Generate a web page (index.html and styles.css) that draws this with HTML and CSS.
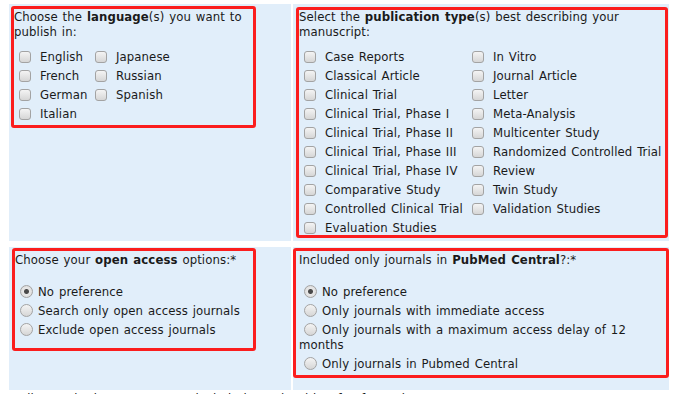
FILE: index.html
```html
<!DOCTYPE html>
<html lang="en">
<head>
    <meta charset="UTF-8">
    <title>Journal search options</title>
    <link rel="stylesheet" href="styles.css">
</head>
<body>
    <div class="options">

        <!-- Row 1: languages / publication types -->
        <div class="cell cell-lang">
            <div class="mark mark-lang">
                <p class="ask">Choose the <b>language</b>(s) you want to publish in:</p>
                <div class="checks checks-lang">
                    <label class="opt"><input type="checkbox">English</label>
                    <label class="opt"><input type="checkbox">French</label>
                    <label class="opt"><input type="checkbox">German</label>
                    <label class="opt"><input type="checkbox">Italian</label>
                    <label class="opt"><input type="checkbox">Japanese</label>
                    <label class="opt"><input type="checkbox">Russian</label>
                    <label class="opt"><input type="checkbox">Spanish</label>
                </div>
            </div>
        </div>

        <div class="cell cell-type">
            <div class="mark mark-type">
                <p class="ask">Select the <b>publication type</b>(s) best describing your manuscript:</p>
                <div class="checks checks-type">
                    <label class="opt"><input type="checkbox">Case Reports</label>
                    <label class="opt"><input type="checkbox">Classical Article</label>
                    <label class="opt"><input type="checkbox">Clinical Trial</label>
                    <label class="opt"><input type="checkbox">Clinical Trial, Phase I</label>
                    <label class="opt"><input type="checkbox">Clinical Trial, Phase II</label>
                    <label class="opt"><input type="checkbox">Clinical Trial, Phase III</label>
                    <label class="opt"><input type="checkbox">Clinical Trial, Phase IV</label>
                    <label class="opt"><input type="checkbox">Comparative Study</label>
                    <label class="opt"><input type="checkbox">Controlled Clinical Trial</label>
                    <label class="opt"><input type="checkbox">Evaluation Studies</label>
                    <label class="opt"><input type="checkbox">In Vitro</label>
                    <label class="opt"><input type="checkbox">Journal Article</label>
                    <label class="opt"><input type="checkbox">Letter</label>
                    <label class="opt"><input type="checkbox">Meta-Analysis</label>
                    <label class="opt"><input type="checkbox">Multicenter Study</label>
                    <label class="opt"><input type="checkbox">Randomized Controlled Trial</label>
                    <label class="opt"><input type="checkbox">Review</label>
                    <label class="opt"><input type="checkbox">Twin Study</label>
                    <label class="opt"><input type="checkbox">Validation Studies</label>
                </div>
            </div>
        </div>

        <!-- Row 2: open access / PubMed Central -->
        <div class="cell cell-oa">
            <div class="mark mark-oa">
                <p class="ask">Choose your <b>open access</b> options:*</p>
                <div class="radios">
                    <label class="pick"><input type="radio" name="oa" checked>No preference</label>
                    <label class="pick"><input type="radio" name="oa">Search only open access journals</label>
                    <label class="pick"><input type="radio" name="oa">Exclude open access journals</label>
                </div>
            </div>
        </div>

        <div class="cell cell-pmc">
            <div class="mark mark-pmc">
                <p class="ask">Included only journals in <b>PubMed Central</b>?:*</p>
                <div class="radios">
                    <label class="pick"><input type="radio" name="pmc" checked>No preference</label>
                    <label class="pick"><input type="radio" name="pmc">Only journals with immediate access</label>
                    <label class="pick"><input type="radio" name="pmc">Only journals with a maximum access delay of 12 months</label>
                    <label class="pick"><input type="radio" name="pmc">Only journals in Pubmed Central</label>
                </div>
            </div>
        </div>
    </div>

    <p class="foot">Indicate whether you want to include journals with a fee for authors:</p>
</body>
</html>
```

FILE: styles.css
```css
body {
    margin: 0;
    padding: 4px 0 0 9px;
    font-family: "DejaVu Sans", Verdana, sans-serif;
    font-stretch: condensed;
    font-size: 13px;
    line-height: 15px;
    word-spacing: 1px;
    letter-spacing: 0.1px;
    color: #1a1a1a;
    background: #fff;
}
.options {
    display: grid;
    grid-template-columns: 282px 376px;
    grid-template-rows: 237px 143px;
    column-gap: 2px;
    row-gap: 6px;
    width: 660px;
}
.cell {
    background: #e1eefa;
}
/* red outline boxes round each question */
.mark {
    border: 3px solid #fb1d1d;
    border-radius: 3px;
}
.mark-lang {
    width: 239px;
    height: 116px;
    margin: 2px 0 0 2px;
}
.mark-type {
    width: 366px;
    height: 225px;
    margin: 3px 0 0 3px;
}
.mark-oa {
    width: 238px;
    height: 96px;
    margin: 1px 0 0 3px;
    padding-top: 1px;
}
.mark-pmc {
    width: 367px;
    height: 123px;
    margin: 1px 0 0 0;
    padding: 1px 0 0 3px;
}
.ask {
    margin: 0;
}
.mark-type .ask {
    margin-top: -1px;
}
.checks {
    display: grid;
    grid-auto-flow: column;
    grid-auto-rows: 19px;
    margin-top: 8px;
}
.checks-lang {
    grid-template-rows: repeat(4, 19px);
    grid-template-columns: 76px auto;
}
.checks-type {
    grid-template-rows: repeat(10, 19px);
    grid-template-columns: 168px auto;
}
.opt {
    display: block;
    padding-top: 2px;
    white-space: nowrap;
}
.radios {
    margin-top: 15px;
}
.pick {
    display: block;
    padding: 2px 0;
}
input[type="checkbox"],
input[type="radio"] {
    -webkit-appearance: none;
    appearance: none;
    display: inline-block;
    width: 12px;
    height: 12px;
    vertical-align: -2px;
    border: 1px solid #a3a3a3;
    background: linear-gradient(#f4f4f4, #d6d6d6);
    box-sizing: border-box;
}
input[type="checkbox"] {
    margin: 0 9px 0 5px;
    border-radius: 3px;
}
input[type="radio"] {
    margin: 0 5px 0 5px;
    border-radius: 50%;
    width: 13px;
    height: 13px;
}
input[type="radio"]:checked {
    background: radial-gradient(circle, #4a4a4a 0 2px, #e8e8e8 3px, #d6d6d6 100%);
}
.foot {
    margin: 1px 0 0 3px;
}
```
